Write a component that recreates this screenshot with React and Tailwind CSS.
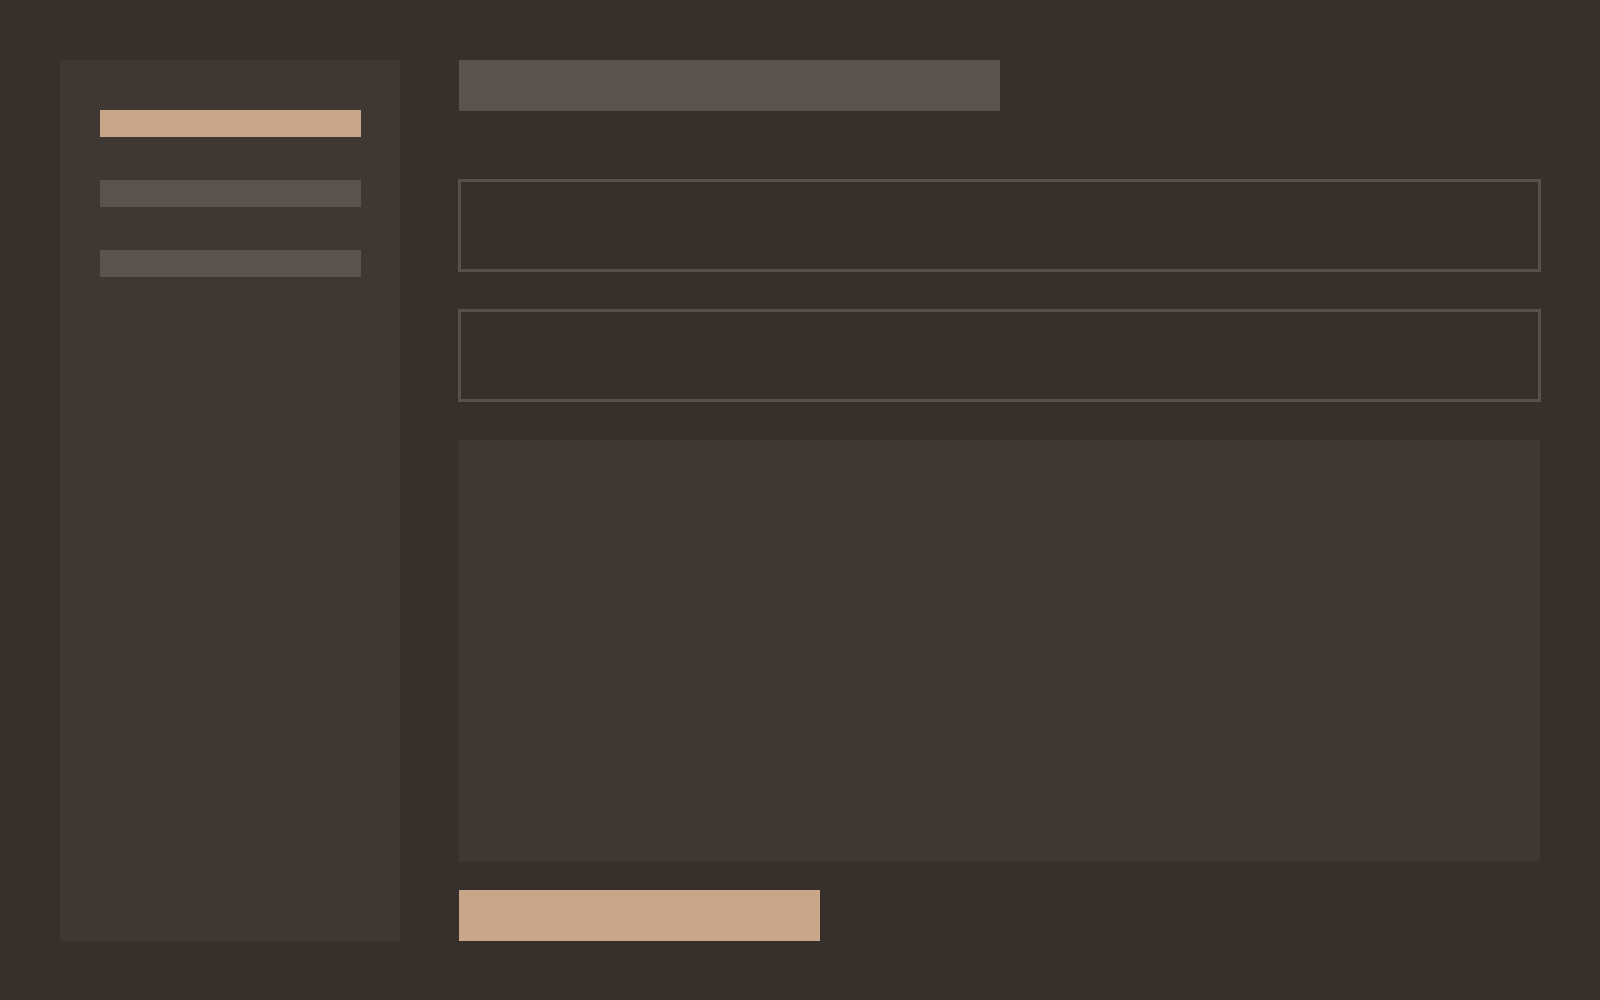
import React from 'react';

const navItems = [
  { id: 'primary', active: true },
  { id: 'second', active: false },
  { id: 'third', active: false },
];

export default function App() {
  return (
    <div className="min-h-screen w-full bg-[#36302c] p-[60px] font-['Liberation_Sans',sans-serif]">
      <div className="flex gap-[59px]">
        <aside className="w-[341px] h-[881px] bg-[#3d3834] pt-[50px] pl-[40px]">
          <div className="flex flex-col gap-[43px]">
            {navItems.map((item) => (
              <div
                key={item.id}
                className={item.active ? 'w-[261px] h-[27px] bg-[#c7a68a]' : 'w-[261px] h-[27px] bg-[#5a524d]'}
              />
            ))}
          </div>
        </aside>

        <main className="w-[1081px] flex flex-col">
          <div className="w-[541px] h-[51px] bg-[#5a524d]" />
          <div className="mt-[68px] -ml-px w-[1083px] h-[93px] border-[3px] border-[#57504b]" />
          <div className="mt-[37px] -ml-px w-[1083px] h-[93px] border-[3px] border-[#57504b]" />
          <div className="mt-[38px] w-[1081px] h-[421px] bg-[#3d3834]" />
          <div className="mt-[29px] w-[361px] h-[51px] bg-[#c7a68a]" />
        </main>
      </div>
    </div>
  );
}
